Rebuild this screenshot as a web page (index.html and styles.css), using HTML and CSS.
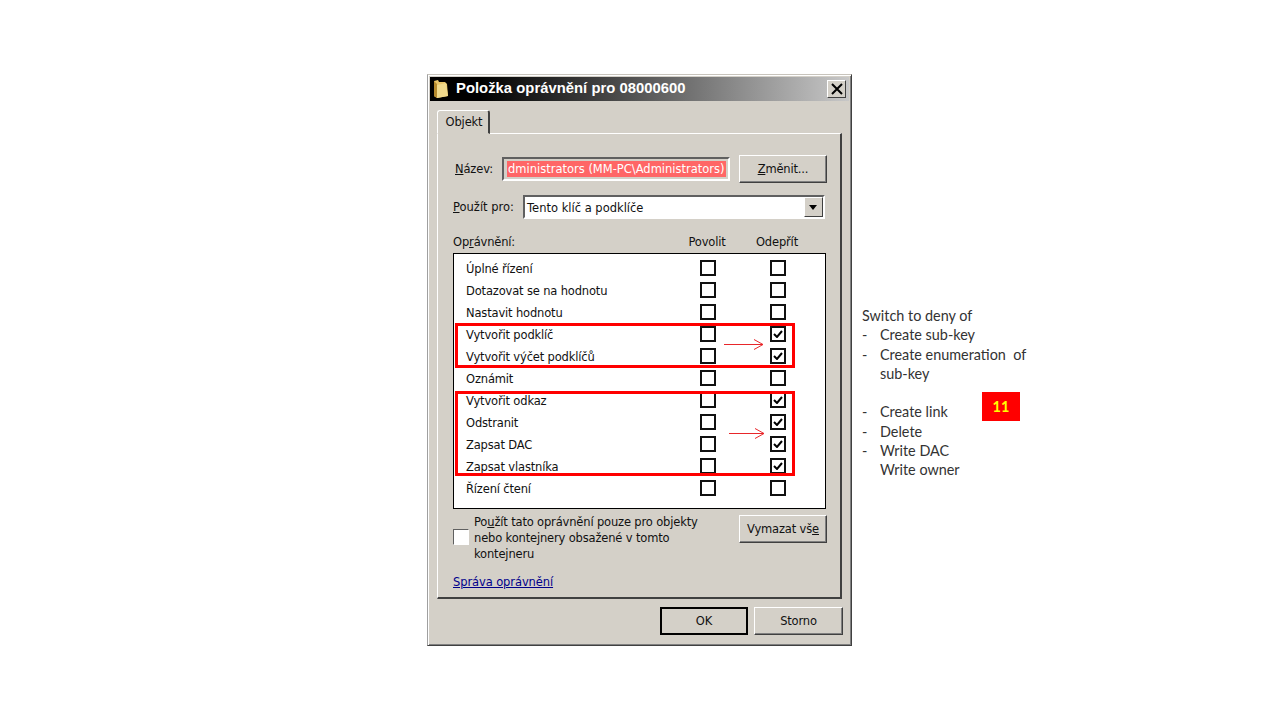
FILE: index.html
```html
<!DOCTYPE html>
<html lang="cs">
<head>
<meta charset="utf-8">
<title>Položka oprávnění</title>
<link rel="stylesheet" href="styles.css">
</head>
<body>
<div class="window">
  <div class="titlebar">
    <svg class="folder" width="16" height="20" viewBox="0 0 16 20"><path d="M1 2 L5 1 L6 3 L12 3 L14 5 L15 17 L4 19 L1 17 Z" fill="#e8c468"/><path d="M1 2 L4 5 L4 19 L1 17 Z" fill="#b58a2e"/><path d="M4 6 L13 4 L15 17 L4 19 Z" fill="#f0d98c"/></svg>
    <span class="title-text">Položka oprávnění pro 08000600</span>
    <span class="close"><svg width="12" height="12" viewBox="0 0 12 12"><path d="M1 1 L11 11 M11 1 L1 11" stroke="#000" stroke-width="2" fill="none"/></svg></span>
  </div>
  <div class="tabs"><div class="tab">Objekt</div></div>
  <div class="panel">
    <div class="name-row">
      <span class="name-label"><u>N</u>ázev:</span>
      <div class="field"><span class="selected">dministrators (MM-PC\Administrators)</span></div>
      <div class="btn change-btn"><span><u>Z</u>měnit...</span></div>
    </div>
    <div class="apply-row">
      <span class="apply-label"><u>P</u>oužít pro:</span>
      <div class="combo"><span class="combo-text">Tento klíč a podklíče</span><span class="combo-arrow"></span></div>
    </div>
    <div class="head-row">
      <span class="head-name">Op<u>r</u>ávnění:</span>
      <span class="head-col">Povolit</span>
      <span class="head-col">Odepřít</span>
    </div>
    <div class="list">
      <div class="row"><span class="row-name">Úplné řízení</span><span class="cb"></span><span class="cb"></span></div>
      <div class="row"><span class="row-name">Dotazovat se na hodnotu</span><span class="cb"></span><span class="cb"></span></div>
      <div class="row"><span class="row-name">Nastavit hodnotu</span><span class="cb"></span><span class="cb"></span></div>
      <div class="row"><span class="row-name">Vytvořit podklíč</span><span class="cb"></span><span class="cb on"><svg width="10" height="8" viewBox="0 0 10 8"><path d="M1 4 L4 7 L9 1" stroke="#000" stroke-width="2" fill="none"/></svg></span></div>
      <div class="row"><span class="row-name">Vytvořit výčet podklíčů</span><span class="cb"></span><span class="cb on"><svg width="10" height="8" viewBox="0 0 10 8"><path d="M1 4 L4 7 L9 1" stroke="#000" stroke-width="2" fill="none"/></svg></span></div>
      <div class="row"><span class="row-name">Oznámit</span><span class="cb"></span><span class="cb"></span></div>
      <div class="row"><span class="row-name">Vytvořit odkaz</span><span class="cb"></span><span class="cb on"><svg width="10" height="8" viewBox="0 0 10 8"><path d="M1 4 L4 7 L9 1" stroke="#000" stroke-width="2" fill="none"/></svg></span></div>
      <div class="row"><span class="row-name">Odstranit</span><span class="cb"></span><span class="cb on"><svg width="10" height="8" viewBox="0 0 10 8"><path d="M1 4 L4 7 L9 1" stroke="#000" stroke-width="2" fill="none"/></svg></span></div>
      <div class="row"><span class="row-name">Zapsat DAC</span><span class="cb"></span><span class="cb on"><svg width="10" height="8" viewBox="0 0 10 8"><path d="M1 4 L4 7 L9 1" stroke="#000" stroke-width="2" fill="none"/></svg></span></div>
      <div class="row"><span class="row-name">Zapsat vlastníka</span><span class="cb"></span><span class="cb on"><svg width="10" height="8" viewBox="0 0 10 8"><path d="M1 4 L4 7 L9 1" stroke="#000" stroke-width="2" fill="none"/></svg></span></div>
      <div class="row"><span class="row-name">Řízení čtení</span><span class="cb"></span><span class="cb"></span></div>
      <div class="mark mark-a"></div>
      <div class="mark mark-b"></div>
      <svg class="arrow arrow-a" width="40" height="13" viewBox="0 0 40 13"><path d="M0 6.5 H39 M30 1.5 L39 6.5 L30 11.5" stroke="#e8262a" stroke-width="1" fill="none"/></svg>
      <svg class="arrow arrow-b" width="36" height="13" viewBox="0 0 36 13"><path d="M0 6.5 H35 M26 1.5 L35 6.5 L26 11.5" stroke="#e8262a" stroke-width="1" fill="none"/></svg>
    </div>
    <div class="option-row">
      <span class="plain-cb"></span>
      <span class="option-text">Po<u>u</u>žít tato oprávnění pouze pro objekty<br>nebo kontejnery obsažené v tomto<br>kontejneru</span>
      <div class="btn clear-btn"><span>Vymazat vš<u>e</u></span></div>
    </div>
    <a class="manage-link" href="#">Správa oprávnění</a>
  </div>
  <div class="footer">
    <div class="btn default-btn"><span>OK</span></div>
    <div class="btn"><span>Storno</span></div>
  </div>
</div>
<div class="notes">
  <p>Switch to deny of</p>
  <p class="item"><span class="dash">-</span>Create sub-key</p>
  <p class="item"><span class="dash">-</span>Create enumeration&nbsp; of</p>
  <p class="item"><span class="dash"></span>sub-key</p>
  <p class="item"><span class="dash"></span>&nbsp;</p>
  <p class="item"><span class="dash">-</span>Create link</p>
  <p class="item"><span class="dash">-</span>Delete</p>
  <p class="item"><span class="dash">-</span>Write DAC</p>
  <p class="item"><span class="dash"></span>Write owner</p>
</div>
<div class="badge">11</div>
</body>
</html>
```
FILE: styles.css
```css
* { box-sizing: border-box; }
html, body { margin: 0; padding: 0; width: 1280px; height: 720px; overflow: hidden; background: #fff; }
body { position: relative; font-family: "DejaVu Sans", sans-serif; font-size: 11.5px; letter-spacing: -0.16px; color: #111; }

.window {
  position: absolute; left: 427px; top: 74px; width: 425px; height: 572px;
  background: #d4d0c8; padding: 2px;
  border: 1px solid; border-color: #c8c4bc #404040 #404040 #a0a0a0;
  box-shadow: inset 1px 1px #fff, inset -1px -1px #808080;
}
.titlebar {
  height: 24px; display: flex; align-items: center; padding: 0 3px 0 3px;
  background: linear-gradient(to right, #000 0%, #000 12%, #c8c8c8 100%);
  color: #fff;
}
.folder { flex: none; }
.title-text { font-weight: bold; font-family: "Liberation Sans", sans-serif; font-size: 14.8px; letter-spacing: 0.03px; margin: -2px 0 0 7px; flex: 1; white-space: nowrap; }
.close {
  width: 19px; height: 18px; display: flex; align-items: center; justify-content: center; flex: none;
  background: #d4d0c8; border: 1px solid; border-color: #fff #404040 #404040 #fff;
}
.tabs { padding-left: 7px; margin-top: 9px; height: 23px; position: relative; }
.tab {
  width: 53px; height: 24px; background: #d4d0c8; position: relative; z-index: 1; padding-left: 2px;
  border: 1px solid; border-color: #fff #404040 #d4d0c8 #fff; border-right-width: 2px;
  border-radius: 3px 3px 0 0;
  display: flex; align-items: center; justify-content: center;
}
.panel {
  margin-left: 7px; width: 405px; height: 466px; padding: 21px 12px 0 15px;
  border: 1px solid; border-color: #fff #404040 #404040 #fff; border-width: 1px 2px 2px 1px;
}
.name-row { display: flex; align-items: center; height: 28px; padding-left: 2px; }
.name-label { width: 47px; flex: none; }
.field {
  width: 228px; height: 24px; background: #d4d0c8; overflow: hidden; flex: none;
  border: 2px solid; border-color: #606060 #fff #fff #606060;
  box-shadow: inset 0 0 0 1px #d4d0c8;
  padding: 2px 3px; white-space: nowrap; display: flex;
}
.selected { background: #ff6666; color: #fff; line-height: 16px; padding: 0 1px; letter-spacing: 0; }
.btn {
  width: 89px; height: 28px; background: #d4d0c8; display: flex; align-items: center; justify-content: center; flex: none;
  border: 1px solid; border-color: #fff #404040 #404040 #fff;
  box-shadow: inset -1px -1px #808080;
}
.change-btn { margin-left: 9px; width: 88px; }
.apply-row { display: flex; align-items: center; height: 24px; margin-top: 12px; }
.apply-label { width: 70px; flex: none; letter-spacing: 0; }
.combo {
  width: 302px; height: 24px; background: #fff; display: flex; align-items: center; justify-content: space-between; flex: none;
  border: 2px solid; border-color: #606060 #fff #fff #606060; padding-left: 2px;
}
.combo-text { padding-top: 1px; letter-spacing: 0; }
.combo-arrow {
  width: 19px; height: 20px; background: #d4d0c8; position: relative;
  border: 1px solid; border-color: #fff #404040 #404040 #fff;
}
.combo-arrow::after {
  content: ""; position: absolute; left: 4px; top: 7px;
  border: 4px solid transparent; border-top: 5px solid #000; border-bottom: 0;
}
.head-row { display: flex; align-items: center; height: 16px; margin-top: 15px; }
.head-name { width: 220px; flex: none; }
.head-col { width: 68px; text-align: center; flex: none; }
.head-col + .head-col { width: 72px; }
.list {
  position: relative; width: 373px; height: 256px; margin-top: 3px; padding-top: 3px;
  background: #fff; border: 1px solid #000;
}
.row { display: flex; align-items: center; height: 22px; }
.row-name { width: 246px; padding: 1px 0 0 12px; flex: none; }
.cb {
  width: 16px; height: 16px; border: 2px solid #111; background: #fff; margin-right: 54px; flex: none;
  display: flex; align-items: center; justify-content: center;
}
.cb svg { display: block; }
.mark { position: absolute; left: 1px; width: 340px; border: 3px solid #f00; pointer-events: none; }
.mark-a { top: 69px; height: 45px; }
.mark-b { top: 137px; height: 85px; }
.arrow { position: absolute; }
.arrow-a { left: 270px; top: 84px; }
.arrow-b { left: 275px; top: 173px; }
.option-row { position: relative; display: flex; align-items: flex-start; height: 60px; margin-top: 5px; }
.plain-cb {
  width: 16px; height: 16px; margin-top: 15px; background: #fff; flex: none;
  border: 1px solid; border-color: #606060 #fff #fff #606060;
}
.option-text { margin-left: 5px; width: 266px; flex: none; line-height: 16px; white-space: nowrap; }
.clear-btn { margin-left: -1px; margin-top: 1px; width: 88px; }
.manage-link { display: inline-block; margin-top: 1px; color: #00008b; letter-spacing: -0.1px; }
.footer { display: flex; justify-content: flex-end; gap: 6px; margin-top: 8px; padding-right: 6px; }
.default-btn { border: 2px solid #000; border-color: #000; box-shadow: none; width: 88px; }
.notes {
  position: absolute; left: 862px; top: 306px; width: 175px;
  font-family: "Lato", sans-serif; font-size: 14.4px; letter-spacing: 0; color: #333; line-height: 19.25px;
}
.notes p { margin: 0; white-space: nowrap; }
.dash { display: inline-block; width: 18px; }
.badge {
  position: absolute; left: 982px; top: 392px; width: 38px; height: 29px;
  background: #f00; color: #ff0; font-weight: bold; font-family: "Lato", sans-serif; font-size: 14.5px; letter-spacing: 0;
  display: flex; align-items: center; justify-content: center;
}
```
